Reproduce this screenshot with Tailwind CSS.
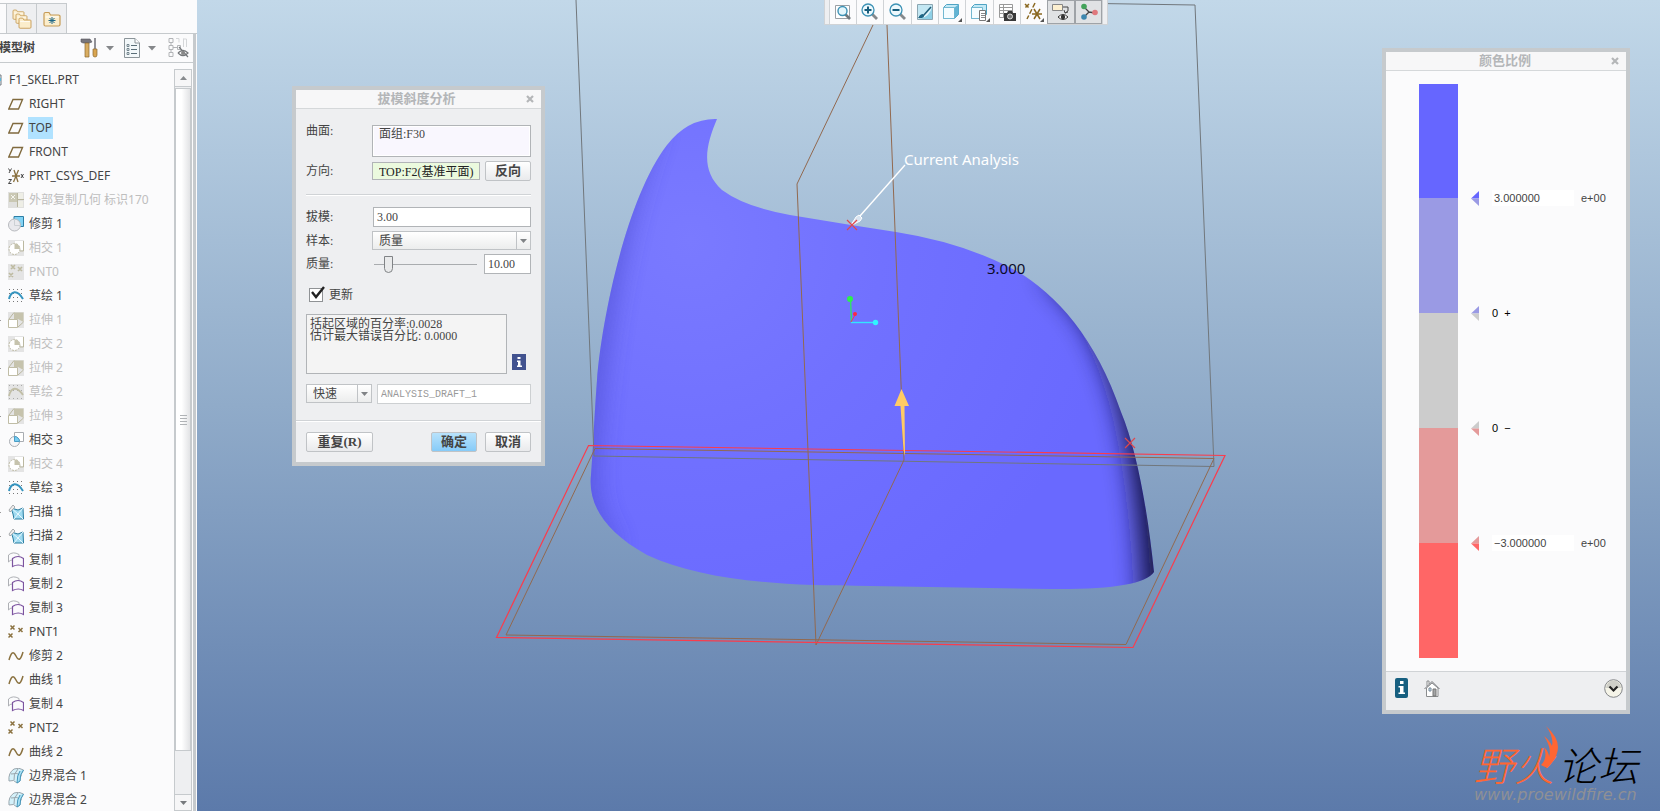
<!DOCTYPE html>
<html lang="zh-CN">
<head>
<meta charset="utf-8">
<title>F1_SKEL.PRT</title>
<script src="https://cdn.jsdelivr.net/npm/@tailwindcss/browser@4"></script>
</head>
<body class="flex h-screen overflow-hidden bg-[#fbfbfc] font-['Noto_Sans','Noto_Sans_CJK_SC',sans-serif] text-xs text-[#444]">

<svg class="hidden" aria-hidden="true">
  <symbol id="plane" viewBox="0 0 16 16"><path d="M5 3.5h9.5L10.5 13H.8z" fill="none" stroke="#806a3e" stroke-width="1.4"/></symbol>
  <symbol id="csys" viewBox="0 0 16 16"><path d="M4 8h8M6 2l4 12M10.500 2L5.500 14" fill="none" stroke="#8a713f" stroke-width="1.3"/><path d="M.5.5l1.500 2.500M3.500.5L1 5M13 6l2.500 4M15.500 6L13 10M.5 11.500h3L.5 15.500h3" fill="none" stroke="#333" stroke-width=".9"/></symbol>
  <symbol id="ext" viewBox="0 0 16 16"><path d="M0 0h16v16H0z" fill="#e0e0de"/><path d="M1 1h8v9H1z" fill="#cac8b4"/><path d="M3 3l4 4M7 3L3 7" stroke="#f4f4ee"/><path d="M10 1h5v6h-5zM9 9h6v6H9z" fill="#eeeee6"/><path d="M9.500 1v14M9.500 7.500H16" stroke="#b9b69f" fill="none"/></symbol>
  <symbol id="trim" viewBox="0 0 16 16"><path d="M6 .5h9.500v10H6z" fill="#82d3f5" stroke="#2c7ea5"/><circle cx="6.500" cy="9" r="6" fill="#e9e9ed" stroke="#b7b9bd"/><path d="M6.500 3.500v6h6" fill="none" stroke="#ccd0d4"/></symbol>
  <symbol id="intG" viewBox="0 0 16 16"><path d="M0 0h16v16H0z" fill="#e4e4e4"/><path d="M7 1h8v9H7z" fill="#fff"/><path d="M15.500 1v10H12" stroke="#bbb8a0" fill="none"/><circle cx="6.500" cy="9" r="5.500" fill="#fff" stroke="#bdbaa4" stroke-dasharray="2 1"/><path d="M6.500 9V3.500A5.500 5.500 0 0 1 12 9z" fill="#c6c3ad"/></symbol>
  <symbol id="int" viewBox="0 0 16 16"><path d="M6.500.5h9v9h-9z" fill="#fff" stroke="#a9adb2"/><circle cx="6.500" cy="9.500" r="5" fill="#f6f6f8" stroke="#a9adb2"/><path d="M6.500 9.500v-5a5 5 0 0 1 5 5z" fill="#78cdf2" stroke="#4a9cc4"/></symbol>
  <symbol id="pntG" viewBox="0 0 16 16"><path d="M0 0h16v16H0z" fill="#e4e4e4"/><path d="M3 1l4 4M7 1L3 5M10 3l4 4M14 3l-4 4M1 9l4 4M5 9l-4 4" stroke="#bdbaa0" stroke-width="1.600"/></symbol>
  <symbol id="pnt" viewBox="0 0 16 16"><path d="M2.500 1.500l4 4M6.500 1.500l-4 4M10.500 4l4 4M14.500 4l-4 4M.5 9.500l4 4M4.500 9.500l-4 4" stroke="#8a713f" stroke-width="1.500"/></symbol>
  <symbol id="skG" viewBox="0 0 16 16"><path d="M0 0h16v16H0z" fill="#e4e4e4"/><path d="M1 1.500h15M1 6.500h15M1 14.500h15" stroke="#aaa" stroke-dasharray="1 3"/><path d="M1 12C3 3 9 2 15 11" fill="none" stroke="#c1bea6" stroke-width="1.800"/></symbol>
  <symbol id="sk" viewBox="0 0 16 16"><path d="M1 1.500h15M1 5.500h15M1 9.500h15M1 13.500h15" stroke="#777" stroke-dasharray="1 3"/><path d="M1 11C3 3 9 1 15 11" fill="none" stroke="#3594bf" stroke-width="2"/></symbol>
  <symbol id="exG" viewBox="0 0 16 16"><path d="M0 0h16v16H0z" fill="#e4e4e4"/><path d="M6 .5h9.500V10L10 7H6z" fill="#c6c3ad"/><path d="M.5 7.500h9v8h-9z" fill="#fff" stroke="#c0bda6"/><path d="M1 7l5-6.500M10 15l5.500-5" stroke="#b9b69f" fill="none"/></symbol>
  <symbol id="sweep" viewBox="0 0 16 16"><path d="M3 4l7 2 5-2 .5 11H6L5 10z" fill="#9edaf0" stroke="#287ca0"/><path d="M3 4l7 6 5 5M10 10l-4 5M10 10l5-6" stroke="#e8f8ff" fill="none"/><path d="M1 6l4-5 2 2-5 5z" fill="#eee" stroke="#a8abae"/></symbol>
  <symbol id="copy" viewBox="0 0 16 16"><path d="M.5 10V3Q5-1 11 2.500V6M.5 10Q2 8 4 8" fill="none" stroke="#aeb0b5"/><path d="M4.500 6.500q5.500-4 11 0v8q-5-3-11 0z" fill="#fbf9fd" stroke="#7c53a0" stroke-width="1.200"/></symbol>
  <symbol id="curve" viewBox="0 0 16 16"><path d="M1 12C3 5 5 2 8 8s5 3 7-4" fill="none" stroke="#8a713f" stroke-width="1.500"/></symbol>
  <symbol id="blend" viewBox="0 0 16 16"><path d="M6 1q5-2 9.500 1-4 5-3.500 11l-3 2Q6 11 1 13 0 5 6 1z" fill="#d4f1fa" stroke="#9aa6ad"/><path d="M10 1Q5 6 6 12M3 6q6-2 11 2" fill="none" stroke="#9aa6ad"/><path d="M15.500 2q-4 5-3.500 11l-3 2Q9 7 12 3" fill="#a9e0f3" stroke="#4598bd"/></symbol>
  <symbol id="folder" viewBox="0 0 18 16"><path d="M1 13.500V3q0-1.500 1.500-1.500H6L7.500 4h8Q17 4 17 5v8.500Q17 15 15.500 15h-13Q1 15 1 13.500z" fill="#fbedcb" stroke="#c69b56" stroke-width="1.200"/><path d="M2.500 6h13" stroke="#fff"/></symbol>
</svg>

<aside class="flex w-[197px] shrink-0 flex-col overflow-hidden">
  <nav class="flex h-[34px] shrink-0 items-end border-b border-[#c6cacd]">
    <div class="h-[30px] w-[7px] border-r border-t border-[#c6cacd]"></div>
    <button aria-label="文件夹浏览器" class="flex h-[30px] w-[30px] items-center justify-center border-r border-t border-[#c6cacd] bg-[#eeeff1]">
      <svg class="size-5" viewBox="0 0 20 20"><use href="#folder" x="0" y="0" width="13" height="11"/><use href="#folder" x="3" y="4" width="13" height="11"/><use href="#folder" x="6" y="8" width="14" height="12"/></svg>
    </button>
    <button aria-label="收藏夹" class="flex h-[30px] w-[30px] items-center justify-center border-r border-t border-[#c6cacd] bg-[#eeeff1]">
      <svg class="h-4 w-[18px]" viewBox="0 0 18 16"><use href="#folder"/><path d="M9 6v7M5.500 9.500h7M6.500 7l5 5M11.500 7l-5 5" stroke="#1c6788"/></svg>
    </button>
  </nav>
  <div class="mr-px flex min-h-0 flex-1 flex-col border-r-[3px] border-[#c6cacd]">
    <header class="flex h-[29px] shrink-0 items-center border-b border-[#c6cacd] pr-1">
      <h1 class="-ml-px flex-1 text-xs font-bold">模型树</h1>
      <button aria-label="设置" class="flex items-center gap-2">
        <svg class="h-5 w-[18px]" viewBox="0 0 18 20"><path d="M1 4V1h9l2 3-3 1H3z" fill="#77767c" stroke="#54545c" stroke-width=".6"/><path d="M5 5h4v14H5z" fill="#d9ad61" stroke="#8b672e" stroke-width=".7"/><path d="M15 0v12" stroke="#77777e" stroke-width="1.600"/><path d="M13 11h4v6q0 2-2 2t-2-2z" fill="#d9a550" stroke="#8b672e" stroke-width=".7"/></svg>
        <svg class="h-[5px] w-2" viewBox="0 0 8 5"><path d="M0 0h8L4 4.500z" fill="#85878a"/></svg>
      </button>
      <button aria-label="显示" class="flex items-center gap-2 pl-2.5">
        <svg class="h-5 w-4" viewBox="0 0 16 20"><path d="M.5.5H11L15.500 5v14.500H.5z" fill="#f3f8fa" stroke="#8b9499"/><path d="M11 .5V5h4.500" fill="#fff" stroke="#8b9499"/><path d="M7 7.500h6M7 11.500h6M7 15.500h6" stroke="#5a6e78"/><path d="M3 6.500h2v2H3zM3 10.500h2v2H3zM3 14.500h2v2H3z" fill="none" stroke="#5a6e78" stroke-width=".8"/></svg>
        <svg class="h-[5px] w-2" viewBox="0 0 8 5"><path d="M0 0h8L4 4.500z" fill="#85878a"/></svg>
      </button>
      <button aria-label="隐藏项" class="pl-3">
        <svg class="h-5 w-[21px]" viewBox="0 0 21 20" fill="none"><path d="M1 .5h4v4H1zM1 7.500h4v4H1zM1 14.500h4v4H1zM3 5v2M3 12v2M9.500 7.500h3v4h-3zM5 9.500h4" stroke="#b2b4b7"/><path d="M8 .5h3v4M15.500 9V.5M18.500 9V1h-3" stroke="#d5d7d9"/><path d="M10 15q5-5 10 0-5 5-10 0M11 9l9 10" stroke="#74777a" stroke-width="1.200"/><circle cx="15" cy="15" r="2" fill="#888"/></svg>
      </button>
    </header>
    <div class="flex min-h-0 flex-1 pt-[5px]">
      <ul class="min-w-0 flex-1 overflow-hidden whitespace-nowrap [&_span]:px-px [&_span]:leading-[22px] [&_svg]:size-4 [&_svg]:shrink-0 [&>li]:flex [&>li]:h-6 [&>li]:items-center [&>li]:gap-1 [&>li]:pl-2 [&>li]:text-[#444] [&>li.off]:text-[#bebebe]">
        <li class="-ml-[22px]"><svg viewBox="0 0 16 16"><path d="M1 3h14v10H1z" fill="#e5f4fa" stroke="#777b80"/><path d="M9 6h6v3H9z" fill="#59b8dd"/></svg><span class="pl-[3px]!">F1_SKEL.PRT</span></li>
        <li><svg><use href="#plane"/></svg><span>RIGHT</span></li>
        <li><svg><use href="#plane"/></svg><span class="bg-[#b0e2ff]">TOP</span></li>
        <li><svg><use href="#plane"/></svg><span>FRONT</span></li>
        <li><svg><use href="#csys"/></svg><span>PRT_CSYS_DEF</span></li>
        <li class="off"><svg><use href="#ext"/></svg><span>外部复制几何 标识170</span></li>
        <li><svg><use href="#trim"/></svg><span>修剪 1</span></li>
        <li class="off"><svg><use href="#intG"/></svg><span>相交 1</span></li>
        <li class="off"><svg><use href="#pntG"/></svg><span>PNT0</span></li>
        <li><svg><use href="#sk"/></svg><span>草绘 1</span></li>
        <li class="off bg-[linear-gradient(#999,#999)] bg-[length:1px_1px] bg-left bg-no-repeat"><svg><use href="#exG"/></svg><span>拉伸 1</span></li>
        <li class="off"><svg><use href="#intG"/></svg><span>相交 2</span></li>
        <li class="off bg-[linear-gradient(#999,#999)] bg-[length:1px_1px] bg-left bg-no-repeat"><svg><use href="#exG"/></svg><span>拉伸 2</span></li>
        <li class="off"><svg><use href="#skG"/></svg><span>草绘 2</span></li>
        <li class="off bg-[linear-gradient(#999,#999)] bg-[length:1px_1px] bg-left bg-no-repeat"><svg><use href="#exG"/></svg><span>拉伸 3</span></li>
        <li><svg><use href="#int"/></svg><span>相交 3</span></li>
        <li class="off"><svg><use href="#intG"/></svg><span>相交 4</span></li>
        <li><svg><use href="#sk"/></svg><span>草绘 3</span></li>
        <li class="bg-[linear-gradient(#999,#999)] bg-[length:1px_1px] bg-left bg-no-repeat"><svg><use href="#sweep"/></svg><span>扫描 1</span></li>
        <li class="bg-[linear-gradient(#999,#999)] bg-[length:1px_1px] bg-left bg-no-repeat"><svg><use href="#sweep"/></svg><span>扫描 2</span></li>
        <li><svg><use href="#copy"/></svg><span>复制 1</span></li>
        <li><svg><use href="#copy"/></svg><span>复制 2</span></li>
        <li><svg><use href="#copy"/></svg><span>复制 3</span></li>
        <li><svg><use href="#pnt"/></svg><span>PNT1</span></li>
        <li><svg><use href="#curve"/></svg><span>修剪 2</span></li>
        <li><svg><use href="#curve"/></svg><span>曲线 1</span></li>
        <li><svg><use href="#copy"/></svg><span>复制 4</span></li>
        <li><svg><use href="#pnt"/></svg><span>PNT2</span></li>
        <li><svg><use href="#curve"/></svg><span>曲线 2</span></li>
        <li><svg><use href="#blend"/></svg><span>边界混合 1</span></li>
        <li><svg><use href="#blend"/></svg><span>边界混合 2</span></li>
      </ul>
      <div class="mr-px mt-px flex w-[18px] shrink-0 flex-col border border-[#c6cacd] bg-[#eeeff1]">
        <button aria-label="向上滚动" class="flex h-[17px] shrink-0 items-center justify-center border-b border-[#c6cacd] bg-[#f6f6f7]"><svg class="h-1 w-[7px]" viewBox="0 0 7 4"><path d="M0 4h7L3.500 0z" fill="#888b8e"/></svg></button>
        <div class="mt-px flex flex-1 items-center justify-center border border-[#c6cacd] bg-linear-to-r from-white from-40% to-[#e2e3e5]">
          <svg class="h-3 w-[7px]" viewBox="0 0 7 12"><path d="M0 1.500h7M0 4.500h7M0 7.500h7M0 10.500h7" stroke="#b0b3b6"/></svg>
        </div>
        <div class="h-[43px] shrink-0"></div>
        <button aria-label="向下滚动" class="flex h-4 shrink-0 items-center justify-center border-t border-[#c6cacd] bg-[#f6f6f7]"><svg class="h-1 w-[7px]" viewBox="0 0 7 4"><path d="M0 0h7L3.500 4z" fill="#777a7d"/></svg></button>
      </div>
    </div>
  </div>
</aside>

<main class="relative min-w-0 flex-1 overflow-hidden bg-linear-to-b from-[#c2d8e9] via-[#90abc9] to-[#5c7aaa]">
  <svg class="block size-full" viewBox="197 0 1463 811" preserveAspectRatio="xMinYMin slice" font-family="Noto Sans, sans-serif" role="img" aria-label="拔模斜度分析模型">
    <defs>
      <radialGradient id="skin" gradientUnits="userSpaceOnUse" cx="690" cy="240" r="430"><stop offset="0" stop-color="#7a7aff"/><stop offset=".45" stop-color="#7171ff"/><stop offset="1" stop-color="#6969ff"/></radialGradient>
      <path id="hull" d="M717 119Q688 118 667 145C625 200 601 325 597 380C594 420 593 450 591 475C588 502 602 530 647 555C700 579 770 586 870 586L1050 589Q1142 590 1154 572C1148 513 1137 450 1121 412C1095 335 1052 289 1009 267Q960 242 896 232L851 225L790 215Q745 207 722 190C700 170 706 145 717 119z"/>
      <clipPath id="cut"><use href="#hull"/></clipPath>
      <filter id="soft" filterUnits="userSpaceOnUse" x="540" y="60" width="700" height="600"><feGaussianBlur stdDeviation="13"/></filter>
    </defs>
    <use href="#hull" fill="url(#skin)"/>
    <g clip-path="url(#cut)">
      <path d="M650 120Q598 260 585 470Q584 520 610 550" fill="none" stroke="#4444c4" stroke-width="16" opacity=".8" filter="url(#soft)"/>
      <path d="M1040 270L1080 315Q1112 365 1126 440T1143 610L1200 610V300z" fill="#141440" filter="url(#soft)"/>
    </g>
    <g fill="none" stroke-width="1">
      <path d="M576 0l18 456 620 10.500L1195 5l-95-1.500" stroke="#71777c"/>
      <path d="M873 25l-76 159 19 461 88-185-17-435M595 448.500l619 10-88 186-620-9.500z" stroke="#92694f"/>
      <path d="M588.500 445.500L1225 455.500 1133 647.500 496.500 637.500z" stroke="#fa3c4c" stroke-width="1.200"/>
      <path d="M905 165l-53 60" stroke="#fff" stroke-width="1.400"/>
      <path d="M851 225l5-8 3-2 3 3-2 3-8 4z" stroke="#fff" fill="#d8e4f0"/>
      <path d="M847 220l10 10M857 220l-10 10M1125 438l10 10M1135 438l-10 10" stroke="#e0484c" stroke-width="1.200"/>
      <path d="M851.500 322l-1-23" stroke="#34e06a" stroke-width="1.400"/><path d="M851 322.500h24" stroke="#33e5ff" stroke-width="1.400"/><path d="M851 322l4-7" stroke="#f03858"/>
    </g>
    <circle cx="850" cy="299" r="3" fill="#2cf04c"/><circle cx="875.500" cy="322.500" r="2.700" fill="#30f4ff"/><circle cx="855" cy="314" r="2" fill="#ff2840"/>
    <path d="M901.500 389l7.500 17h-4.500l.5 50-1.500-6-3-44h-6z" fill="#ffcb65"/>
    <text x="904" y="165" font-size="15" fill="#fff">Current Analysis</text>
    <text x="987" y="274" font-size="15" fill="#0b0b28">3.000</text>
  </svg>

  <div role="toolbar" aria-label="图形工具栏" class="absolute left-[627px] top-0 flex h-[25px] border border-t-0 border-[#d0d3d6] bg-[#eeeff1] px-1 [&_svg]:size-5 [&>button]:flex [&>button]:h-6 [&>button]:w-[27px] [&>button]:items-center [&>button]:justify-center [&>button]:border-l [&>button]:border-[#d0d3d6] [&>button]:bg-[#fbfbfc] [&>button:nth-child(3n)]:w-[28px] [&>button:nth-child(n+9)]:bg-[#e0e2e4] [&>button:nth-child(n+9)]:border [&>button:nth-child(n+9)]:border-[#9fa3a7]">
    <button aria-label="重新调整"><svg viewBox="0 0 20 20"><path d="M2.500 3.500h14v13h-14z" fill="#fff" stroke="#9aa0a5"/><path d="M12 12l5 5" stroke="#70787d" stroke-width="2.600"/><circle cx="9.500" cy="9" r="4.500" fill="#e4f6fc" stroke="#3d92b5" stroke-width="1.400"/></svg></button>
    <button aria-label="放大"><svg viewBox="0 0 20 20"><path d="M12 12l5 5" stroke="#85898c" stroke-width="2.800"/><circle cx="8" cy="8" r="6" fill="#eef9fd" stroke="#3d92b5" stroke-width="1.300"/><path d="M4.500 8h7M8 4.500v7" stroke="#175d7c" stroke-width="2"/></svg></button>
    <button aria-label="缩小"><svg viewBox="0 0 20 20"><path d="M12 12l5 5" stroke="#85898c" stroke-width="2.800"/><circle cx="8" cy="8" r="6" fill="#eef9fd" stroke="#3d92b5" stroke-width="1.300"/><path d="M4.500 8h7" stroke="#175d7c" stroke-width="2"/></svg></button>
    <button aria-label="重画"><svg viewBox="0 0 20 20"><path d="M2.500 2.500h15v15h-15z" fill="#eaf7fb" stroke="#8ba6b2"/><path d="M3 3h14v2Q14 12 5 14H3z" fill="#c3e7f3"/><path d="M17 5v12H5Q15 14 17 5z" fill="#8fd0e6"/><path d="M8 14l8-9" stroke="#1f5c78" stroke-width="1.500"/><path d="M3 16q2-4 5-4l1 3q-3 2-6 1z" fill="#1f6787"/></svg></button>
    <button aria-label="显示样式"><svg viewBox="0 0 20 20"><path d="M1.500 5.500l3-3h12v10l-4 4h-11z" fill="#c3e9f6" stroke="#4fa3c3"/><path d="M1.500 5.500h11v11h-11z" fill="#f4fcff" stroke="#72b8d1"/><path d="M12.500 5.500l4-3v10l-4 4z" fill="#62b4d4"/><path d="M20 16v4h-4z" fill="#555"/></svg></button>
    <button aria-label="已保存方向"><svg viewBox="0 0 20 20"><path d="M1.500 5.500l3-3h12v10l-4 4h-11z" fill="#c3e9f6" stroke="#4fa3c3"/><path d="M1.500 5.500h11v11h-11z" fill="#f4fcff" stroke="#72b8d1"/><path d="M9.500 8.500h6v10h-6z" fill="#fff" stroke="#777"/><path d="M11 11.500h4M11 13.500h4M11 15.500h4" stroke="#888"/><path d="M20 16v4h-4z" fill="#555"/></svg></button>
    <button aria-label="视图管理器"><svg viewBox="0 0 20 20"><path d="M2.500 2.500h13v13h-13zM2.500 5.500h13M2.500 8.500h13M2.500 11.500h13M6.500 2.500v13" fill="#fff" stroke="#999"/><path d="M7 11h3l1-2h4l1 2h3v8H7z" fill="#383838"/><circle cx="13" cy="14.500" r="2.500" fill="#777" stroke="#ddd"/></svg></button>
    <button aria-label="基准显示"><svg viewBox="0 0 20 20"><path d="M1 2l4 4M5 2L1 6M11 1L3 17" stroke="#8a6820" stroke-width="1.500" stroke-dasharray="5 2"/><path d="M8 12h10M10 7l6 10M16 7l-6 10" stroke="#8a6820" stroke-width="1.500"/><path d="M20 16v4h-4z" fill="#555"/></svg></button>
    <button aria-label="注释显示"><svg viewBox="0 0 20 20"><path d="M1.500 2.500h10v6h-10z" fill="#fdf0d0" stroke="#888"/><path d="M12 5h5v4l-3 2M13 8l1 3 3-1" fill="none" stroke="#444"/><path d="M7 15q5-5 10 0-5 5-10 0z" fill="#fff" stroke="#333"/><circle cx="12" cy="15" r="2.200" fill="#333"/></svg></button>
    <button aria-label="旋转中心"><svg viewBox="0 0 20 20"><path d="M10 10L5 5M10 10l6 1M10 10l-5 5" stroke="#444" stroke-width="1.300"/><circle cx="5" cy="4.500" r="2.800" fill="#43a35a"/><circle cx="16" cy="10.500" r="2.800" fill="#e0787c"/><circle cx="5" cy="15" r="2.800" fill="#3d87ae"/></svg></button>
    <span class="border-l border-[#d0d3d6]"></span>
  </div>

  <section aria-labelledby="t1" class="absolute left-[95px] top-[86px] w-[253px] border-4 border-[#c6cacd] bg-[#eeeff1] font-['Liberation_Serif','Noto_Sans_CJK_SC',serif] leading-4">
    <header class="flex h-[19px] items-center border-b border-[#d5d8da] bg-[#f7f7f8] pl-[11px] pr-[7px] text-[#b4b6b8]">
      <h2 id="t1" class="flex-1 text-center text-[13px] font-bold">拔模斜度分析</h2>
      <button aria-label="关闭"><svg class="size-2" viewBox="0 0 8 8"><path d="M1 1l6 6M7 1L1 7" stroke="#b4b6b8" stroke-width="2.200"/></svg></button>
    </header>
    <form class="px-2.5 pt-4">
      <div class="flex"><label for="surf" class="w-[66px] leading-3">曲面:</label><textarea id="surf" class="h-8 flex-1 resize-none border border-[#b1b4b7] bg-[#f9f7fe] px-1.5 leading-4 outline outline-1 -outline-offset-2 outline-white">面组:F30</textarea></div>
      <div class="mt-1 flex h-5 items-center"><label for="dir" class="w-[66px]">方向:</label><input id="dir" value="TOP:F2(基准平面)" class="h-[18px] w-[108px] border border-[#b1b4b7] bg-[#ebfade] pl-1.5 text-[#222]"><button type="button" class="ml-[5px] h-5 flex-1 rounded-xs border border-[#c0c3c6] bg-linear-to-b from-white to-[#e9eaec] text-[13px] font-bold leading-4">反向</button></div>
      <hr class="mt-[13px] h-0.5 border-0 border-t border-[#d0d3d6] bg-white">
      <div class="mt-[11px] flex h-5 items-center"><label for="draft" class="w-[67px]">拔模:</label><input id="draft" value="3.00" class="h-5 min-w-0 flex-1 border border-[#b1b4b7] bg-white pl-[3px]"></div>
      <div class="mt-1 flex h-[19px] items-center"><label for="sample" class="w-[66px]">样本:</label><div class="relative flex-1"><select id="sample" class="block h-[19px] w-full appearance-none border border-[#c0c3c6] bg-linear-to-b from-white to-[#eceded] pl-1.5 leading-4"><option>质量</option></select><span class="pointer-events-none absolute inset-y-0 right-0 flex w-[15px] items-center justify-center border border-[#c0c3c6]"><svg class="h-1 w-[7px]" viewBox="0 0 7 4"><path d="M0 0h7L3.500 4z" fill="#808386"/></svg></span></div></div>
      <div class="mt-1 flex h-5 items-center"><label for="qual" class="w-[68px]">质量:</label><input id="qual" type="range" min="0" max="100" value="11" class="h-[18px] w-[103px] appearance-none bg-[linear-gradient(#a9acaf,#a9acaf)] bg-[length:100%_1px] bg-center bg-no-repeat [&::-webkit-slider-thumb]:h-[17px] [&::-webkit-slider-thumb]:w-[9px] [&::-webkit-slider-thumb]:appearance-none [&::-webkit-slider-thumb]:rounded-t-sm [&::-webkit-slider-thumb]:rounded-b-full [&::-webkit-slider-thumb]:border [&::-webkit-slider-thumb]:border-[#808386] [&::-webkit-slider-thumb]:bg-[#e9eaeb]"><input aria-label="质量值" value="10.00" class="ml-[7px] h-5 min-w-0 flex-1 border border-[#b1b4b7] bg-white pl-[3px]"></div>
      <div class="relative mt-3 flex h-[18px] items-center gap-1.5 pl-[3px]"><input id="upd" type="checkbox" checked class="size-3.5 appearance-none border border-[#8f9295] bg-white"><label for="upd">更新</label><svg class="pointer-events-none absolute left-[5px] top-0 h-3.5 w-3.5" viewBox="0 0 14 14"><path d="M1 6l4 5 8-10" fill="none" stroke="#222" stroke-width="2.400"/></svg></div>
      <div class="mt-2.5 flex items-end gap-[5px]"><textarea aria-label="结果" readonly class="h-[60px] w-[201px] resize-none overflow-hidden border border-[#b1b4b7] bg-[#f4f4f4] px-[3px] pt-[3px] leading-3">括起区域的百分率:0.0028
估计最大错误百分比: 0.0000</textarea><button type="button" aria-label="信息" class="mb-1"><svg class="block h-4 w-3.5" viewBox="0 0 14 16"><path d="M0 0h14v16H0z" fill="#41528f"/><path d="M5.500 3h3v2h-3zM5 6.500h3.500v5H10V13H5v-1.500h1V8H5z" fill="#fff"/></svg></button></div>
      <div class="mt-2.5 flex h-5 items-start gap-[5px]"><div class="relative w-[66px]"><select aria-label="类型" class="block h-[19px] w-full appearance-none border border-[#c0c3c6] bg-linear-to-b from-white to-[#eceded] pl-1.5 leading-4"><option>快速</option></select><span class="pointer-events-none absolute inset-y-0 right-0 flex w-[15px] items-center justify-center border border-[#c0c3c6]"><svg class="h-1 w-[7px]" viewBox="0 0 7 4"><path d="M0 0h7L3.500 4z" fill="#808386"/></svg></span></div><input aria-label="名称" value="ANALYSIS_DRAFT_1" class="h-5 min-w-0 flex-1 border border-[#cdd0d2] bg-white pl-[3px] font-['Liberation_Mono',monospace] text-[10px] text-[#999]"></div>
      <hr class="-mx-2.5 mt-4 h-0.5 border-0 border-t border-[#d0d3d6] bg-white">
      <div class="flex gap-2 pb-2.5 pt-5 text-[13px] font-bold [&>button]:h-5 [&>button]:rounded-xs [&>button]:border [&>button]:border-[#c0c3c6] [&>button]:leading-4 -mt-2.5"><button type="button" class="mr-auto w-[67px] bg-linear-to-b from-white to-[#e9eaec]">重复(R)</button><button type="button" class="w-[46px] bg-linear-to-b from-[#b8e2fb] to-[#86cbf8]">确定</button><button type="button" class="w-[46px] bg-linear-to-b from-white to-[#e9eaec]">取消</button></div>
    </form>
  </section>

  <section aria-labelledby="t2" class="absolute right-[30px] top-[48px] w-[248px] border-4 border-[#c6cacd] bg-[#fbfbfc] font-['Liberation_Sans','Noto_Sans_CJK_SC',sans-serif] text-[11px] leading-4">
    <header class="flex h-[19px] items-center border-b border-[#d5d8da] bg-[#f7f7f8] pl-[13px] pr-[7px] text-[#b4b6b8]">
      <h2 id="t2" class="flex-1 text-center text-[13px] font-bold">颜色比例</h2>
      <button aria-label="关闭"><svg class="size-2" viewBox="0 0 8 8"><path d="M1 1l6 6M7 1L1 7" stroke="#b4b6b8" stroke-width="2.200"/></svg></button>
    </header>
    <div class="flex pb-[13px] pl-[33px] pt-[13px]">
      <div class="flex w-[39px] flex-col [&>div]:h-[115px]"><div class="h-[114px]! bg-[#6666ff]"></div><div class="bg-[#9a9ae4]"></div><div class="bg-[#cccccc]"></div><div class="bg-[#e49a9a]"></div><div class="bg-[#ff6666]"></div></div>
      <div class="ml-[13px] flex flex-col gap-[99px] pt-[106px] [&>div]:flex [&>div]:h-4 [&>div]:items-center [&_svg]:mr-[13px] [&_svg]:h-[15px] [&_svg]:w-2 [&_input]:mr-[7px] [&_input]:h-4 [&_input]:w-[82px] [&_input]:bg-white [&_input]:pl-0.5">
        <div><svg viewBox="0 0 8 15"><path d="M0 7.500L8 0v7.500z" fill="#6666ff"/><path d="M0 7.500h8V15z" fill="#9a9ae4"/></svg><input aria-label="上限" value="3.000000"><span>e+00</span></div>
        <div class="text-black"><svg viewBox="0 0 8 15"><path d="M0 7.500L8 0v7.500z" fill="#9a9ae4"/><path d="M0 7.500h8V15z" fill="#ccc"/></svg><span class="whitespace-pre">0  +</span></div>
        <div class="text-black"><svg viewBox="0 0 8 15"><path d="M0 7.500L8 0v7.500z" fill="#ccc"/><path d="M0 7.500h8V15z" fill="#e49a9a"/></svg><span class="whitespace-pre">0  −</span></div>
        <div><svg viewBox="0 0 8 15"><path d="M0 7.500L8 0v7.500z" fill="#e49a9a"/><path d="M0 7.500h8V15z" fill="#ff6666"/></svg><input aria-label="下限" value="−3.000000"><span>e+00</span></div>
      </div>
    </div>
    <footer class="flex h-[39px] items-center border-t border-[#d0d3d6] bg-[#eeeff1] pb-1.5 pl-[9px] pr-[3px]">
      <button aria-label="信息"><svg class="block h-5 w-[13px]" viewBox="0 0 13 20"><rect width="13" height="20" rx="2" fill="#165f80"/><path d="M5 3h3.500v3H5zM3.500 8h5v6.500H10V16H3.500v-1.500H5v-5H3.500z" fill="#fff"/></svg></button>
      <button aria-label="主页" class="ml-4"><svg class="block h-[17px] w-4" viewBox="0 0 16 17"><path d="M2.500 8L8 3l6 5v8.500H2.500zM3 6V1h2v3" fill="#fff" stroke="#8a8c8e"/><path d="M.5 9L8 1.500 15.500 9" fill="none" stroke="#75777a"/><path d="M5 8h2v3H5z" fill="#cdeaf5" stroke="#789"/><path d="M9 9h3v7H9z" fill="#a4a5a6" stroke="#777"/></svg></button>
      <button aria-label="展开" class="ml-auto"><svg class="block size-[19px]" viewBox="0 0 19 19"><circle cx="9.500" cy="9.500" r="8.800" fill="#f5f4e8" stroke="#85878a"/><path d="M2 9a7.500 7.500 0 0 1 15 0z" fill="#cfcfc8"/><path d="M5.500 7.500l4 4 4-4" fill="none" stroke="#222" stroke-width="2.200"/></svg></button>
    </footer>
  </section>

  <div class="absolute bottom-2 right-[22px] flex flex-col items-start italic">
    <div class="relative flex gap-1 text-[40px] font-light leading-10"><span class="text-[#ff6633]">野火</span><span class="text-black">论坛</span>
      <svg class="absolute -top-5 left-[64px] h-[42px] w-5" viewBox="0 0 20 42"><path d="M8 0Q20 11 20 21 20 32 9 42L3 39Q10 32 6 21 11 26 11 31 14 22 6 10 12 15 14 20 16 11 8 0z" fill="#ff6633"/></svg>
    </div>
    <a href="#" class="mt-px font-['DejaVu_Sans',sans-serif] text-base leading-4 text-[#8f9095]">www.proewildfire.cn</a>
  </div>
</main>
</body>
</html>
